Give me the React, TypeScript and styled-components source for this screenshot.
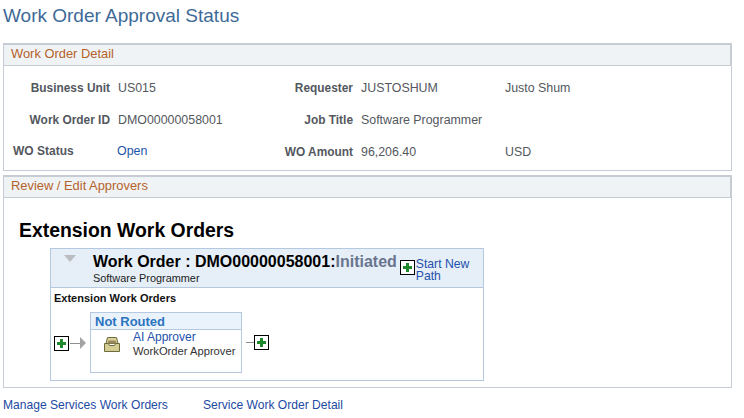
import styled, { createGlobalStyle } from "styled-components";

const GlobalStyle = createGlobalStyle`
    html, body {
        margin: 0;
        padding: 0;
        background-color: #FFFFFF;
        font-family: "Liberation Sans", Arial, sans-serif;
    }
`;

function PlusButton() {
    return (
        <PlusBox>
            <svg width="11" height="11" viewBox="0 0 11 11">
                <path d="M4 1h3v3h3v3H7v3H4V7H1V4h3z" fill="#1f8a2b" />
            </svg>
        </PlusBox>
    );
}

function InboxIcon() {
    return (
        <svg width="16" height="15" viewBox="0 0 16 15">
            <path d="M3.5 .5h9l1.5 6H2z" fill="#d8d29a" stroke="#6f6a3c" />
            <path d="M4.5 3.5h7l1 3h-9z" fill="#9a8560" />
            <path d="M.5 6.5h4l1 2h5l1-2h4v8H.5z" fill="#d3cd94" stroke="#6f6a3c" />
        </svg>
    );
}

export default function App() {
    return (
        <Page>
            <GlobalStyle />
            <Title>Work Order Approval Status</Title>

            <DetailSection>
                <SectionHeader>Work Order Detail</SectionHeader>
                <DetailGrid>
                    <Label>Business Unit</Label>
                    <Value>US015</Value>
                    <Label>Requester</Label>
                    <Value>JUSTOSHUM</Value>
                    <Value>Justo Shum</Value>

                    <Label>Work Order ID</Label>
                    <Value>DMO00000058001</Value>
                    <Label>Job Title</Label>
                    <Value>Software Programmer</Value>
                    <Value />

                    <StatusLabel>WO Status</StatusLabel>
                    <StatusValue>Open</StatusValue>
                    <Label>WO Amount</Label>
                    <Value>96,206.40</Value>
                    <Value>USD</Value>
                </DetailGrid>
            </DetailSection>

            <ReviewSection>
                <SectionHeader>Review / Edit Approvers</SectionHeader>
                <ReviewBody>
                    <ApprovalHeading>Extension Work Orders</ApprovalHeading>
                    <PathCard>
                        <PathHeader>
                            <Collapse />
                            <PathTitleBlock>
                                <PathTitle>
                                    Work Order : DMO00000058001:<Initiated>Initiated</Initiated>
                                </PathTitle>
                                <PathSub>Software Programmer</PathSub>
                            </PathTitleBlock>
                            <StartPath>
                                <PlusButton />
                                <StartLink>Start New<br />Path</StartLink>
                            </StartPath>
                        </PathHeader>
                        <PathBody>
                            <StageName>Extension Work Orders</StageName>
                            <StepRow>
                                <PlusButton />
                                <ArrowLine />
                                <ArrowHead />
                                <StepCard>
                                    <StepHead>Not Routed</StepHead>
                                    <StepBody>
                                        <InboxIcon />
                                        <StepText>
                                            <ApproverName>AI Approver</ApproverName>
                                            <ApproverRole>WorkOrder Approver</ApproverRole>
                                        </StepText>
                                    </StepBody>
                                </StepCard>
                                <TailLine />
                                <PlusButton />
                            </StepRow>
                        </PathBody>
                    </PathCard>
                </ReviewBody>
            </ReviewSection>

            <Footer>
                <FooterLink>Manage Services Work Orders</FooterLink>
                <FooterLink>Service Work Order Detail</FooterLink>
            </Footer>
        </Page>
    );
}

const Page = styled.div`
    width: 744px;
    height: 418px;
    overflow: hidden;
    padding: 0 12px 0 3px;
    box-sizing: border-box;
`;

const Title = styled.h1`
    margin: 0;
    height: 43px;
    padding-top: 4px;
    box-sizing: border-box;
    font-size: 19px;
    line-height: 24px;
    font-weight: 400;
    color: #3e6a97;
`;

const Section = styled.section`
    border: 1px solid #c6ccd4;
    border-top-width: 2px;
    box-sizing: border-box;
`;

const DetailSection = styled(Section)`
    height: 128px;
    margin-bottom: 4px;
`;

const ReviewSection = styled(Section)`
    height: 213px;
`;

const SectionHeader = styled.div`
    height: 20px;
    padding-left: 7px;
    background-color: #f0f3f5;
    border-bottom: 1px solid #c6ccd4;
    border-right: 1px solid #c6ccd4;
    font-size: 12.9px;
    line-height: 17px;
    color: #b4622a;
`;

const DetailGrid = styled.div`
    display: grid;
    grid-template-columns: 106px 135px 92px 136px auto;
    grid-auto-rows: 32px;
    column-gap: 8px;
    padding-top: 6px;
    font-size: 12.4px;
    line-height: 32px;
`;

const Label = styled.div`
    text-align: right;
    font-size: 11.9px;
    font-weight: 700;
    color: #54585e;
`;

const Value = styled.div`
    color: #54585e;
`;

const StatusLabel = styled(Label)`
    text-align: left;
    padding-left: 9px;
    font-size: 12px;
    margin-top: -1px;
`;

const StatusValue = styled(Value)`
    color: #1b55a8;
    margin-top: -1px;
    margin-left: -1px;
`;

const ReviewBody = styled.div`
    padding: 21px 0 0 15px;
`;

const ApprovalHeading = styled.div`
    font-size: 19.4px;
    line-height: 22px;
    font-weight: 700;
    color: #000000;
    margin-bottom: 7px;
`;

const PathCard = styled.div`
    width: 434px;
    height: 133px;
    margin-left: 31px;
    box-sizing: border-box;
    border: 1px solid #b5c9de;
`;

const PathHeader = styled.div`
    display: flex;
    height: 38px;
    background-color: #e6eff7;
    border-bottom: 1px solid #b5c9de;
`;

const Collapse = styled.div`
    width: 0;
    height: 0;
    margin: 6px 17px 0 13px;
    border-style: solid;
    border-width: 7px 6.5px 0 6.5px;
    border-color: #b9bcc0 transparent transparent transparent;
`;

const PathTitleBlock = styled.div`
    padding-top: 3px;
`;

const PathTitle = styled.div`
    font-size: 16px;
    line-height: 20px;
    font-weight: 700;
    color: #000000;
    white-space: nowrap;
`;

const Initiated = styled.span`
    color: #69758f;
`;

const PathSub = styled.div`
    font-size: 10.9px;
    line-height: 13px;
    color: #1c1c1c;
`;

const StartPath = styled.div`
    display: flex;
    align-items: flex-start;
    margin-left: 3px;
    padding-top: 9px;

    ${() => PlusBox} {
        margin-top: 2px;
    }
`;

const StartLink = styled.a`
    margin-left: 1px;
    font-size: 12.2px;
    line-height: 12px;
    color: #2451ad;
`;

const PlusBox = styled.div`
    display: flex;
    flex: none;
    align-items: center;
    justify-content: center;
    width: 15px;
    height: 15px;
    box-sizing: border-box;
    border: 1px solid #000000;
    background-color: #ffffff;
`;

const PathBody = styled.div`
    padding: 4px 0 0 3px;
`;

const StageName = styled.div`
    font-size: 11px;
    line-height: 13px;
    font-weight: 700;
    color: #111111;
    margin-bottom: 7px;
`;

const StepRow = styled.div`
    display: flex;
    align-items: flex-start;

    & > ${PlusBox} {
        margin-top: 24px;
    }

    & > ${PlusBox}:last-child {
        margin-top: 23px;
    }
`;

const ArrowLine = styled.div`
    width: 10px;
    height: 1px;
    margin: 31px 0 0 1px;
    background-color: #8f8f8f;
`;

const ArrowHead = styled.div`
    width: 0;
    height: 0;
    margin: 25px 4px 0 0;
    border-style: solid;
    border-width: 6px 0 6px 6px;
    border-color: transparent transparent transparent #a3a3a3;
`;

const StepCard = styled.div`
    width: 152px;
    height: 61px;
    box-sizing: border-box;
    border: 1px solid #b5c9de;
`;

const StepHead = styled.div`
    height: 16px;
    padding-left: 4px;
    background-color: #eaf3fb;
    border-bottom: 1px solid #b5c9de;
    font-size: 13px;
    line-height: 18px;
    font-weight: 700;
    color: #2a74c0;
`;

const StepBody = styled.div`
    display: flex;
    padding-left: 13px;

    svg {
        margin: 7px 13px 0 0;
    }
`;

const StepText = styled.div`
    line-height: 14px;
`;

const ApproverName = styled.div`
    font-size: 12px;
    color: #2451ad;
`;

const ApproverRole = styled.div`
    font-size: 11.2px;
    color: #333333;
`;

const TailLine = styled.div`
    width: 8px;
    height: 1px;
    margin: 30px 0 0 4px;
    background-color: #8f8f8f;
`;

const Footer = styled.div`
    display: flex;
    gap: 35px;
    padding-top: 10px;
    font-size: 12.08px;
    line-height: 14px;
`;

const FooterLink = styled.a`
    color: #1d4aa3;
`;
